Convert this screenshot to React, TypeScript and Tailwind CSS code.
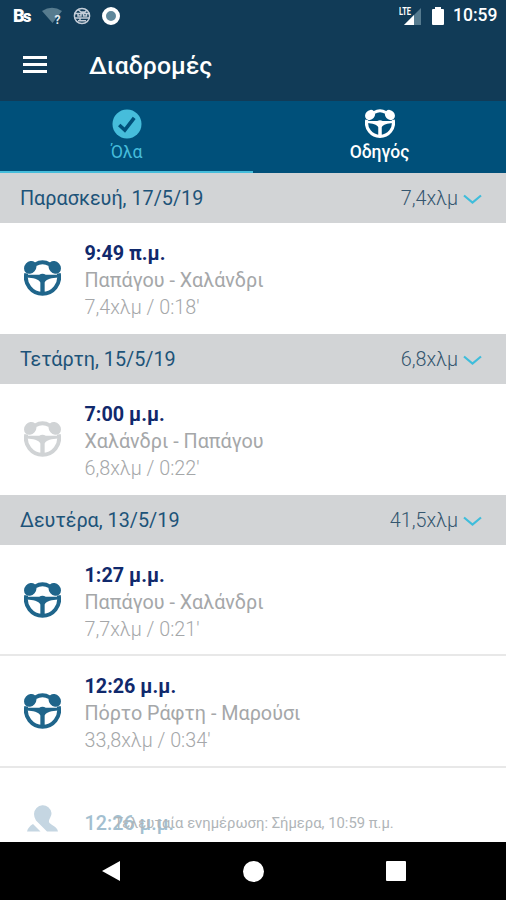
import clsx from "clsx";

type Trip = {
  time: string;
  route: string;
  info: string;
  muted?: boolean;
};

type Day = {
  date: string;
  total: string;
  trips: Trip[];
};

const days: Day[] = [
  {
    date: "Παρασκευή, 17/5/19",
    total: "7,4xλμ",
    trips: [{ time: "9:49 π.μ.", route: "Παπάγου - Χαλάνδρι", info: "7,4xλμ / 0:18'" }],
  },
  {
    date: "Τετάρτη, 15/5/19",
    total: "6,8xλμ",
    trips: [{ time: "7:00 μ.μ.", route: "Χαλάνδρι - Παπάγου", info: "6,8xλμ / 0:22'", muted: true }],
  },
  {
    date: "Δευτέρα, 13/5/19",
    total: "41,5xλμ",
    trips: [
      { time: "1:27 μ.μ.", route: "Παπάγου - Χαλάνδρι", info: "7,7xλμ / 0:21'" },
      { time: "12:26 μ.μ.", route: "Πόρτο Ράφτη - Μαρούσι", info: "33,8xλμ / 0:34'" },
    ],
  },
];

function SteeringWheel({ className }: { className?: string }) {
  return (
    <svg viewBox="0 0 36 36" className={className} fill="none" stroke="currentColor">
      {/* rim */}
      <path d="M11 4.2Q18 0 25 4.2" strokeWidth="3.8" />
      <path d="M2.2 13A16.2 16.2 0 1 0 33.8 13" strokeWidth="3.8" />
      {/* hands */}
      <g fill="currentColor" stroke="none">
        <ellipse cx="6.1" cy="7.2" rx="5.6" ry="6.6" transform="rotate(42 6.1 7.2)" />
        <ellipse cx="29.9" cy="7.2" rx="5.6" ry="6.6" transform="rotate(-42 29.9 7.2)" />
        <path d="M3 14.3H14.8Q18 12.6 21.2 14.3H33V17C27.5 17.3 21.5 18.2 20.1 22V33.5H15.9V22C14.5 18.2 8.5 17.3 3 17Z" />
      </g>
    </svg>
  );
}

function StatusBar() {
  return (
    <div className="flex h-8 items-center pr-[9px] pl-[13px] text-white">
      <span className="flex w-5 items-baseline text-[18px] leading-6 font-black">
        B<span className="-ml-[2px] text-[17px]">s</span>
      </span>
      <svg viewBox="0 0 21 18" className="ml-[9px] h-[18px] w-[21px]">
        <path d="M0 4Q10 -2.5 20 4L10.5 16Z" fill="#577b8e" />
        <text x="12.5" y="16.5" fontSize="12" fontWeight="700" fill="#e5ebef">?</text>
      </svg>
      <svg viewBox="0 0 18 18" className="ml-[10px] size-[18px]" fill="none" stroke="#c4cdd8" strokeWidth="1.5">
        <circle cx="9" cy="9" r="7.6" />
        <path d="M1.5 6.5H16.5M1.5 11H16.5M5 2.5L8 5H12L14 3M5 6.5V9H8V6.5M10.5 6.5V9H13.5V6.5M5 13.8H13M7 11V14" />
      </svg>
      <svg viewBox="0 0 18 18" className="ml-[11px] size-[18px]">
        <circle cx="9" cy="9" r="7" fill="#60889b" stroke="#fff" strokeWidth="4" />
      </svg>
      <svg viewBox="0 0 23 20" className="ml-auto h-5 w-[23px]">
        <path d="M5 19L22 2V19Z" fill="#567b8f" />
        <path d="M5 19L15 9V19Z" fill="#fff" />
        <text x="0" y="9" fontSize="10" fontWeight="700" fill="#fff" textLength="12" lengthAdjust="spacingAndGlyphs">LTE</text>
      </svg>
      <svg viewBox="0 0 12 20" className="ml-[10px] h-5 w-3" fill="#fff">
        <path d="M3 1H9V3H11Q12 3 12 4V18Q12 19 11 19H1Q0 19 0 18V4Q0 3 1 3H3Z" />
      </svg>
      <span className="ml-[9px] w-[44px] text-[17.5px] leading-none font-medium whitespace-nowrap">10:59</span>
    </div>
  );
}

function Tabs() {
  return (
    <div className="grid h-[72px] grid-cols-2 bg-[#00507a]">
      <div className="flex flex-col items-center border-b-2 border-[#46bddb] pt-2 text-[#46bddb]">
        <svg viewBox="0 0 30 30" className="size-[30px]">
          <circle cx="15" cy="15" r="14.5" fill="currentColor" />
          <path d="M7.2 16L12.8 21L22.2 8.8" fill="none" stroke="#00507a" strokeWidth="3.6" />
        </svg>
        <span className="mt-px text-[17.5px] leading-6">Όλα</span>
      </div>
      <div className="flex flex-col items-center pt-2 text-white">
        <SteeringWheel className="size-[30px]" />
        <span className="mt-px text-[17.5px] leading-6 font-medium">Οδηγός</span>
      </div>
    </div>
  );
}

function DayHeader({ date, total }: { date: string; total: string }) {
  return (
    <div className="flex h-[50px] items-center bg-[#d2d4d6] pt-0.5 pr-6 pl-5 text-[19.8px] text-[#1d5379]">
      <span>{date}</span>
      <span className="ml-auto font-light text-[#34566f]">{total}</span>
      <svg viewBox="0 0 19 11" className="ml-[5px] h-[11px] w-[19px]" fill="none" stroke="#3fbddb" strokeWidth="2.2">
        <path d="M1 1.5L9.5 8.5L18 1.5" />
      </svg>
    </div>
  );
}

function TripRow({ trip }: { trip: Trip }) {
  return (
    <div className="flex h-[111px] items-start pl-6">
      <SteeringWheel className={clsx("mt-[37px] size-[37px]", trip.muted ? "text-[#d0d3d5]" : "text-[#1f658b]")} />
      <div className="mt-[17px] ml-[23.5px] text-[19.75px] leading-[27px] whitespace-nowrap">
        <p className="font-bold text-[#10296c]">{trip.time}</p>
        <p className="text-[#a5a7a9]">{trip.route}</p>
        <p className="font-light text-[#a5a7a9]">{trip.info}</p>
      </div>
    </div>
  );
}

export default function App() {
  return (
    <div className="flex h-[900px] w-[506px] flex-col overflow-hidden bg-white font-['Roboto','Noto_Sans',sans-serif]">
      <header className="h-[101px] bg-[#113b57]">
        <StatusBar />
        <div className="flex h-[68px] items-center pl-[23px] text-white">
          <div className="-mt-1 flex w-6 flex-col gap-1">
            <span className="h-[3px] bg-white" />
            <span className="h-[3px] bg-white" />
            <span className="h-[3px] bg-white" />
          </div>
          <h1 className="ml-[42px] text-[24.8px] font-medium">Διαδρομές</h1>
        </div>
      </header>
      <Tabs />

      <main className="relative min-h-0 flex-1 overflow-hidden">
        {days.map((day) => (
          <section key={day.date}>
            <DayHeader date={day.date} total={day.total} />
            <div className="divide-y-2 divide-[#e8e8e8]">
              {day.trips.map((trip) => (
                <TripRow key={trip.time} trip={trip} />
              ))}
            </div>
          </section>
        ))}

        {/* next row, faded under the footer note */}
        <div className="-mt-px flex border-t-2 border-[#e8e8e8] pt-[36px] pl-[27px]">
          <svg viewBox="0 0 31 28" className="h-7 w-[31px]" fill="#c5d6e2">
            <path d="M7 10A8.8 9 0 0 1 24.5 9C24.5 13 21.5 15 22 18C22.5 20.5 30 22 31 27.5H20L9 16.5Q7 13.5 7 10Z" />
            <path d="M0 27.5Q1 23 6 20L13.5 27.5Z" />
          </svg>
          <span className="mt-[6px] ml-[26.5px] text-[19.75px] leading-[27px] font-medium text-[#a3bfd0]">12:26 μ.μ.</span>
        </div>
        <p className="absolute inset-x-0 bottom-[9px] pl-0.5 text-center text-[14.8px] leading-5 text-[#b0b5b8]">
          Τελευταία ενημέρωση: Σήμερα, 10:59 π.μ.
        </p>
      </main>

      <nav className="flex h-[58px] items-center bg-black pl-[102px]">
        <svg viewBox="0 0 18 20" className="h-5 w-[18px]" fill="#fff">
          <path d="M0 10L18 0V20Z" />
        </svg>
        <span className="ml-[123px] size-[21px] rounded-full bg-white" />
        <span className="ml-[122px] size-5 rounded-[1px] bg-white" />
      </nav>
    </div>
  );
}
